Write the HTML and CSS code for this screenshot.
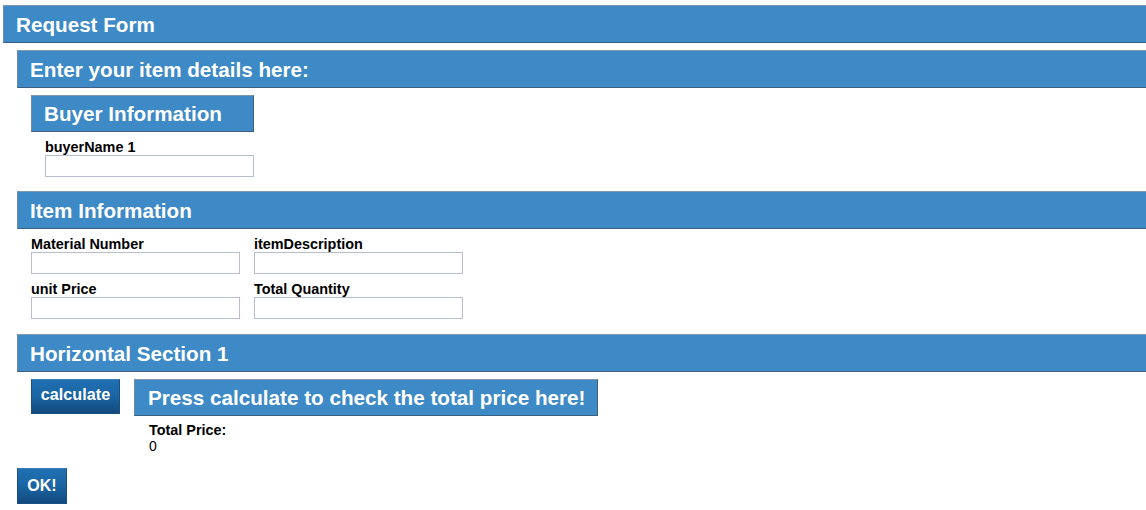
FILE: index.html
```html
<!DOCTYPE html>
<html>
<head>
<meta charset="utf-8">
<link rel="stylesheet" href="styles.css">
</head>
<body>
<div class="page">
  <div class="bar title">Request Form</div>
  <div class="section">
    <div class="bar">Enter your item details here:</div>
    <div class="inner">
      <div class="box buyer">Buyer Information</div>
      <div class="buyer-fields">
        <div class="field">
          <label class="lbl">buyerName 1</label>
          <input class="inp" type="text">
        </div>
      </div>
    </div>
    <div class="bar mid">Item Information</div>
    <div class="inner grid">
      <div class="field">
        <label class="lbl">Material Number</label>
        <input class="inp" type="text">
      </div>
      <div class="field">
        <label class="lbl">itemDescription</label>
        <input class="inp" type="text">
      </div>
      <div class="field">
        <label class="lbl">unit Price</label>
        <input class="inp" type="text">
      </div>
      <div class="field">
        <label class="lbl">Total Quantity</label>
        <input class="inp" type="text">
      </div>
    </div>
    <div class="bar mid">Horizontal Section 1</div>
    <div class="inner row">
      <button class="btn calc">calculate</button>
      <div class="result">
        <div class="box press">Press calculate to check the total price here!</div>
        <div class="total">
          <div class="lbl">Total Price:</div>
          <div class="val">0</div>
        </div>
      </div>
    </div>
  </div>
  <button class="btn ok">OK!</button>
</div>
</body>
</html>
```
FILE: styles.css
```css
html, body {
  margin: 0;
  padding: 0;
  background: #ffffff;
  overflow: hidden;
}
body {
  font-family: "Liberation Sans", Arial, sans-serif;
  color: #000;
}
.page {
  padding: 5px 0 0 3px;
}
.bar, .box {
  background: #3d8ac6;
  color: #ffffff;
  font-weight: bold;
  font-size: 20.67px;
  border-top: 1px solid #7f98b0;
  border-left: 1px solid #6d8aa6;
  border-bottom: 1px solid #3d5f80;
  border-right: 1px solid #3d5f80;
  box-sizing: border-box;
  padding-left: 12px;
}
.bar {
  height: 38px;
  line-height: 37px;
  margin-right: -4px;
}
.section {
  margin-left: 14px;
  margin-top: 7px;
}
.bar.mid {
  margin-top: 14px;
}
.inner {
  padding-left: 14px;
}
.box {
  height: 37px;
  line-height: 36px;
}
.buyer {
  width: 223px;
  margin-top: 7px;
}
.buyer-fields {
  padding-left: 14px;
}
.field {
  display: flex;
  flex-direction: column;
}
.lbl {
  font-size: 14.4px;
  font-weight: bold;
  line-height: 16px;
  margin-top: 7px;
  height: 16px;
}
.inp {
  width: 209px;
  height: 22px;
  box-sizing: border-box;
  border: 1px solid #b8bfcc;
  margin: 0;
  padding: 0;
  background: #fff;
}
.grid {
  display: grid;
  grid-template-columns: 209px 209px;
  column-gap: 14px;
  row-gap: 0;
  padding-bottom: 1px;
}
.row {
  display: flex;
  gap: 14px;
  margin-top: 7px;
  align-items: flex-start;
}
.btn {
  background: linear-gradient(to bottom, #2070b2 0%, #1a64a3 50%, #124a7e 100%);
  color: #fff;
  font-family: "Liberation Sans", Arial, sans-serif;
  font-weight: bold;
  border: 1px solid #1b4f80;
  border-top-color: #3a7cb8;
  padding: 0;
  box-sizing: border-box;
  cursor: pointer;
}
.calc {
  width: 89px;
  height: 35px;
  font-size: 16.2px;
  line-height: 16px;
  padding-bottom: 5px;
}
.press {
  width: 464px;
  padding-left: 13px;
}
.total {
  padding-left: 15px;
}
.total .lbl {
  margin-top: 6px;
}
.val {
  font-size: 14px;
  line-height: 16px;
}
.ok {
  margin-top: 14px;
  margin-left: 14px;
  width: 50px;
  height: 36px;
  font-size: 16px;
}
```
